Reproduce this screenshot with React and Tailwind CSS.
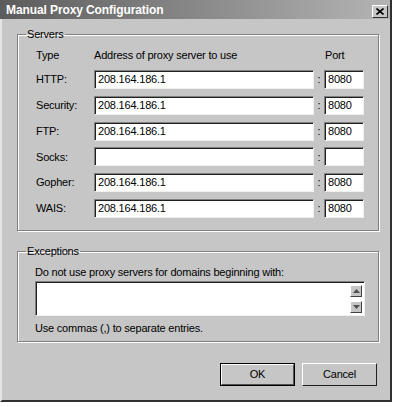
import React from 'react';

const rows = [
  { label: 'HTTP:', addr: '208.164.186.1', port: '8080' },
  { label: 'Security:', addr: '208.164.186.1', port: '8080' },
  { label: 'FTP:', addr: '208.164.186.1', port: '8080' },
  { label: 'Socks:', addr: '', port: '' },
  { label: 'Gopher:', addr: '208.164.186.1', port: '8080' },
  { label: 'WAIS:', addr: '208.164.186.1', port: '8080' },
];

// sunken win32 style edit box
function Field({ value, width }) {
  return (
    <div
      className={`${width} h-[19px] bg-white border border-t-[#808080] border-l-[#808080] border-b-[#f0f0f0] border-r-[#f0f0f0] shadow-[inset_1px_1px_0_#202020] flex items-center pl-[3px] text-[11px] leading-none`}
    >
      {value}
    </div>
  );
}

function Arrow({ up }) {
  return (
    <div className="w-[12px] h-[12px] bg-[#c6c6c6] border border-t-white border-l-white border-b-[#404040] border-r-[#404040] flex items-center justify-center">
      <svg width="7" height="4" viewBox="0 0 7 4">
        {up ? <path d="M0 4 L3.5 0 L7 4 Z" fill="#505050" /> : <path d="M0 0 L3.5 4 L7 0 Z" fill="#505050" />}
      </svg>
    </div>
  );
}

export default function App() {
  return (
    <div className="w-[397px] h-[407px] bg-white" style={{ fontFamily: '"Liberation Sans", Arial, sans-serif' }}>
      <div className="w-[392px] h-[402px] bg-[#c6c6c6] border-l-2 border-l-[#e4e4e4] border-r-2 border-r-[#303030] border-b-2 border-b-[#303030] flex flex-col text-black tracking-[-0.2px]">
        {/* title bar */}
        <div className="h-[19px] bg-gradient-to-r from-[#5c5c5c] via-[#888888] to-[#b4b4b4] flex items-center justify-between pl-[6px] pr-[2px] -ml-[2px]">
          <span className="text-white font-bold text-[12px] leading-none tracking-[-0.1px]">Manual Proxy Configuration</span>
          <div className="w-[16px] h-[13px] mt-[3px] bg-[#c6c6c6] border border-t-white border-l-white border-b-[#303030] border-r-[#303030] flex items-center justify-center">
            <svg width="8" height="7" viewBox="0 0 8 7">
              <path d="M0.5 0.5 L7.5 6.5 M7.5 0.5 L0.5 6.5" stroke="#000" strokeWidth="1.6" />
            </svg>
          </div>
        </div>

        {/* servers */}
        <fieldset className="ml-[15px] mt-[9px] w-[362px] border border-[#808080] shadow-[1px_1px_0_#fff,inset_1px_1px_0_#fff] p-0 text-[11px]">
          <legend className="ml-[8px] px-[1px] h-[13px] leading-[13px]">Servers</legend>
          <div className="pl-[18px] pb-[12px]">
            <div className="flex mt-[8px] h-[13px] leading-[13px]">
              <span className="w-[58px]">Type</span>
              <span className="w-[231px]">Address of proxy server to use</span>
              <span>Port</span>
            </div>
            <div className="flex flex-col gap-[6.8px] mt-[8px]">
              {rows.map((r) => (
                <div key={r.label} className="flex items-center">
                  <span className="w-[58px]">{r.label}</span>
                  <Field value={r.addr} width="w-[220px]" />
                  <span className="w-[10px] text-center">:</span>
                  <Field value={r.port} width="w-[40px]" />
                </div>
              ))}
            </div>
          </div>
        </fieldset>

        {/* exceptions */}
        <fieldset className="ml-[15px] mt-[14px] w-[362px] border border-[#808080] shadow-[1px_1px_0_#fff,inset_1px_1px_0_#fff] p-0 text-[11px]">
          <legend className="ml-[8px] px-[1px] h-[13px] leading-[13px]">Exceptions</legend>
          <div className="pl-[17px] pb-[6px]">
            <div className="mt-[8px] h-[13px] leading-[13px]">Do not use proxy servers for domains beginning with:</div>
            <div className="mt-[2px] w-[330px] h-[35px] bg-white border border-t-[#808080] border-l-[#808080] border-b-[#f0f0f0] border-r-[#f0f0f0] shadow-[inset_1px_1px_0_#202020] flex justify-end pr-[2px] pt-[3px] pb-[2px]">
              <div className="flex flex-col justify-between">
                <Arrow up />
                <Arrow />
              </div>
            </div>
            <div className="mt-[6px] h-[13px] leading-[13px]">Use commas (,) to separate entries.</div>
          </div>
        </fieldset>

        {/* buttons */}
        <div className="flex mt-[21px] ml-[218px] gap-[7px] text-[11px]">
          <div className="w-[75px] h-[23px] border border-black">
            <div className="w-full h-full bg-[#c6c6c6] border border-t-white border-l-white border-b-[#505050] border-r-[#505050] flex items-center justify-center">
              OK
            </div>
          </div>
          <div className="w-[75px] h-[23px] bg-[#c6c6c6] border border-t-white border-l-white border-b-[#202020] border-r-[#202020] flex items-center justify-center">
            Cancel
          </div>
        </div>
      </div>
    </div>
  );
}
